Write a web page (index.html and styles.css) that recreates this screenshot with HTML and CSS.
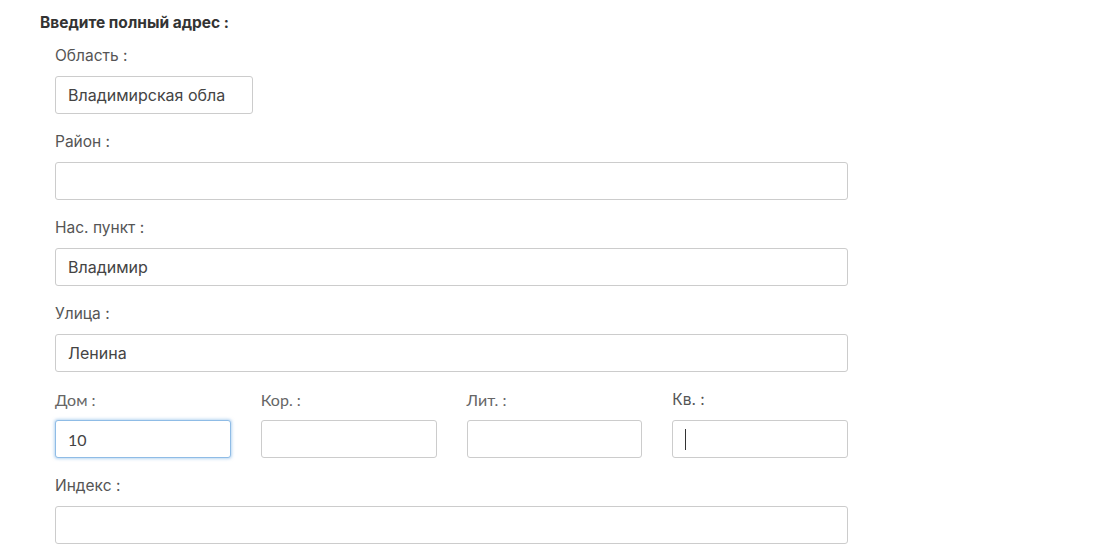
FILE: index.html
```html
<!DOCTYPE html>
<html lang="ru">
<head>
  <meta charset="UTF-8" />
  <meta name="viewport" content="width=device-width, initial-scale=1.0" />
  <title>Адрес</title>
  <link rel="stylesheet" href="styles.css">
</head>
<body>

  <form id="address">
    <h4 class="title">Введите полный адрес :</h4>

    <div class="fields">
      <div class="field">
        <label for="region">Область :</label>
        <input id="region" class="short" type="text" value="Владимирская обла">
      </div>

      <div class="field">
        <label for="district">Район :</label>
        <input id="district" type="text">
      </div>

      <div class="field">
        <label for="city">Нас. пункт :</label>
        <input id="city" type="text" value="Владимир">
      </div>

      <div class="field">
        <label for="street">Улица :</label>
        <input id="street" type="text" value="Ленина">
      </div>

      <div class="row">
        <div class="field">
          <label class="lato" for="house">Дом :</label>
          <input id="house" class="lato is-focus" type="text" value="10">
        </div>
        <div class="field">
          <label class="lato" for="corp">Кор. :</label>
          <input id="corp" type="text">
        </div>
        <div class="field">
          <label class="lato" for="lit">Лит. :</label>
          <input id="lit" type="text">
        </div>
        <div class="field">
          <label for="flat">Кв. :</label>
          <div class="with-caret">
            <input id="flat" type="text">
            <span class="caret"></span>
          </div>
        </div>
      </div>

      <div class="field">
        <label for="zip">Индекс :</label>
        <input id="zip" type="text">
      </div>
    </div>
  </form>

</body>
</html>
```

FILE: styles.css
```css
* {
  margin: 0;
  padding: 0;
  box-sizing: border-box;
}
body {
  font-family: 'Inter', 'Liberation Sans', sans-serif;
  background: #fff;
  color: #555;
}
#address {
  padding: 14px 0 0 40px;
}
.title {
  font-size: 15.5px;
  line-height: 18px;
  font-weight: 700;
  color: #333;
  margin-bottom: 14px;
}
.fields {
  padding-left: 15px;
  width: 808px;
  display: flex;
  flex-direction: column;
  gap: 18px;
}
.field {
  display: flex;
  flex-direction: column;
}
.field label {
  font-size: 15.5px;
  line-height: 20px;
  color: #555;
  margin-bottom: 10px;
}
.field input {
  height: 38px;
  width: 100%;
  border: 1px solid #ccc;
  border-radius: 3px;
  padding: 0 12px;
  font-family: 'Inter', 'Liberation Sans', sans-serif;
  font-size: 16px;
  color: #444;
  background: #fff;
  outline: none;
}
.field input.short {
  width: 198px;
}
.lato,
.field .lato {
  font-family: 'Lato', 'Liberation Sans', sans-serif;
  font-size: 16px;
}
.field label.lato {
  color: #666;
}
.field input.is-focus {
  border-color: #8fbce6;
  box-shadow: 0 0 3px 1px rgba(128, 180, 230, 0.55);
}
.row {
  display: grid;
  grid-template-columns: repeat(4, 1fr);
  gap: 30px;
}
.with-caret {
  position: relative;
}
.caret {
  position: absolute;
  left: 13px;
  top: 9px;
  width: 1px;
  height: 21px;
  background: #333;
}
```
